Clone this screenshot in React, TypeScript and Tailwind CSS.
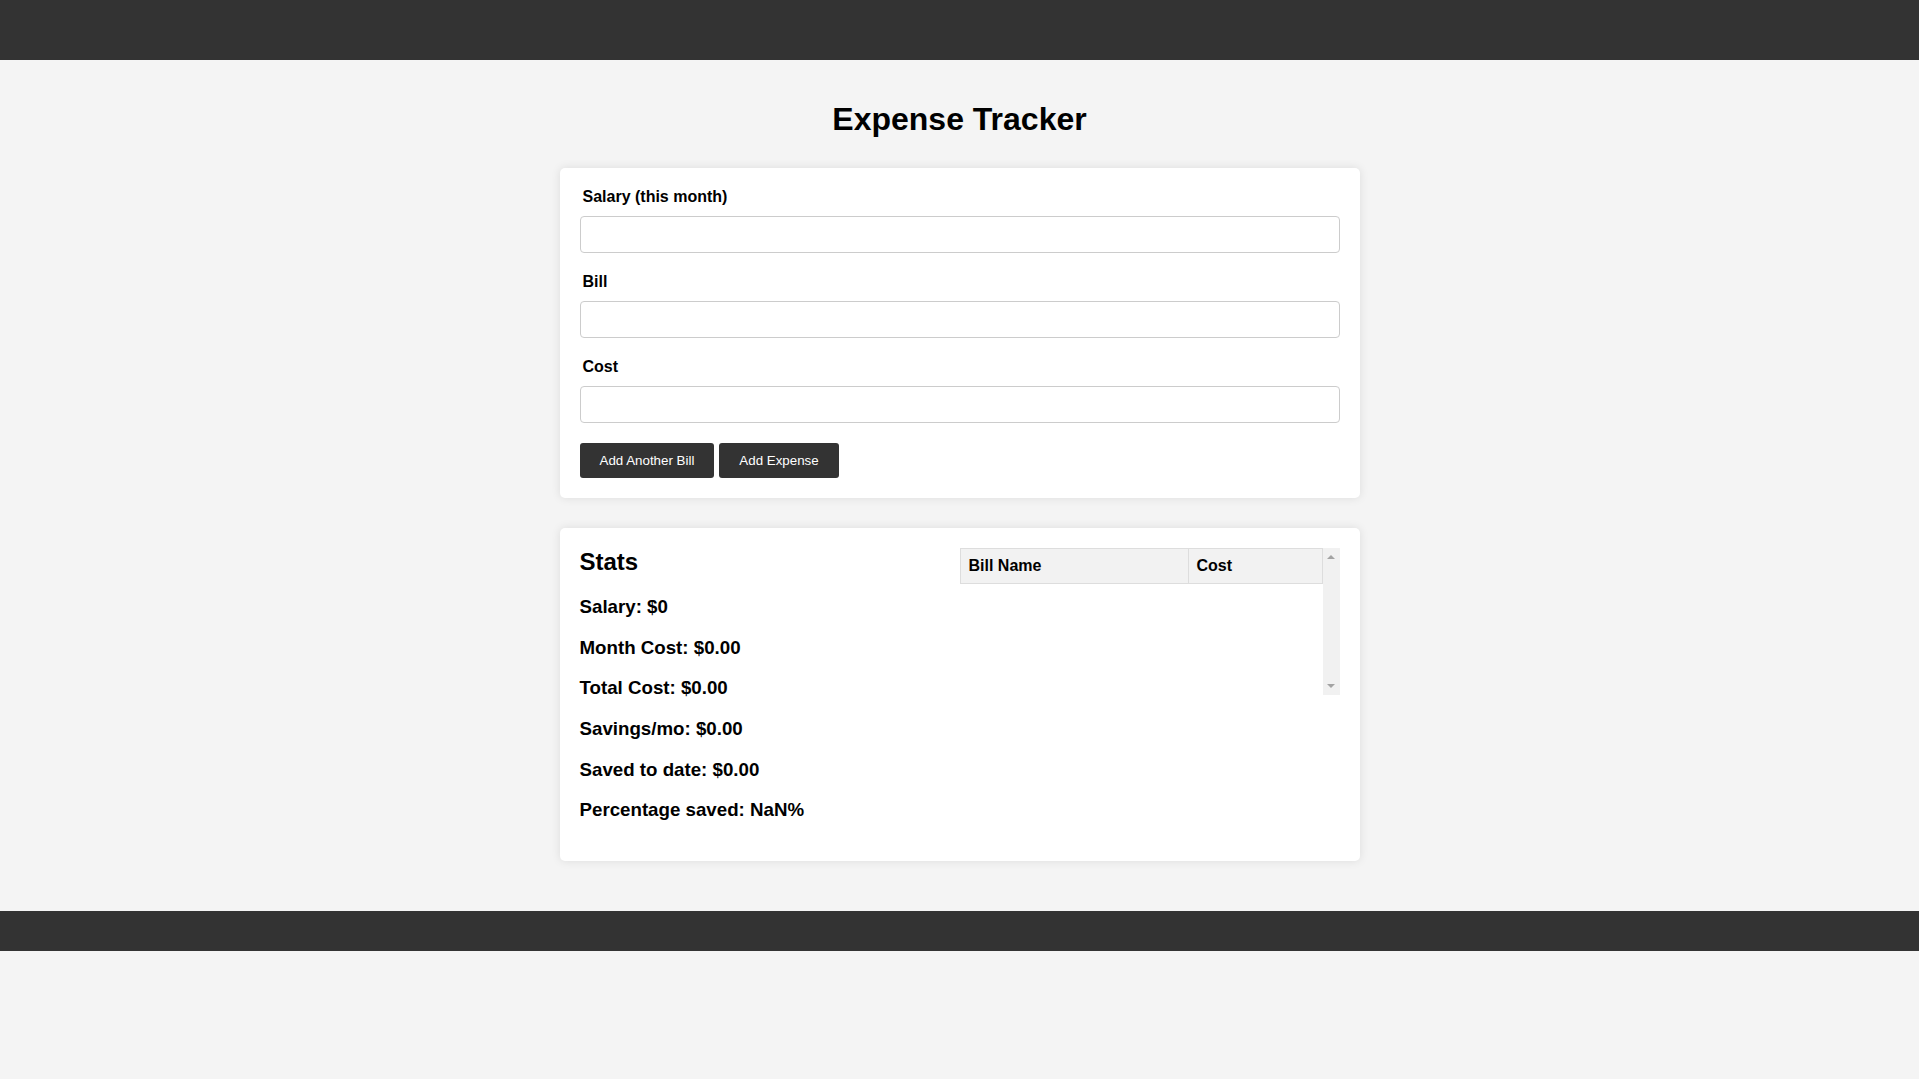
import React from "react";

export default function App() {
  const stats = [
    "Salary: $0",
    "Month Cost: $0.00",
    "Total Cost: $0.00",
    "Savings/mo: $0.00",
    "Saved to date: $0.00",
    "Percentage saved: NaN%",
  ];
  const fields = ["Salary (this month)", "Bill", "Cost"];
  return (
    <div className="min-h-screen bg-[#f4f4f4] text-black font-['Liberation_Sans',Arial,sans-serif]">
      <header className="h-[60px] bg-[#333]" />
      <main className="w-[800px] mx-auto">
        <h1 className="text-[32px] leading-[37px] font-bold text-center mt-[41px] mb-[30px]">
          Expense Tracker
        </h1>
        <section className="bg-white rounded-[5px] shadow-[0_0_10px_rgba(0,0,0,0.1)] p-5">
          {fields.map((f, i) => (
            <div key={f} className={i > 0 ? "mt-5" : ""}>
              <label className="block pl-[3px] text-[16px] leading-[18px] font-bold mb-[10px]">{f}</label>
              <input
                type="text"
                className="block w-full h-[37px] border border-[#ccc] rounded-[4px] bg-white px-[10px] outline-none"
              />
            </div>
          ))}
          <div className="flex mt-5">
            <button className="h-[35px] px-5 bg-[#333] text-white text-[13.333px] rounded-[3px]">
              Add Another Bill
            </button>
            <button className="h-[35px] px-5 ml-[5px] bg-[#333] text-white text-[13.333px] rounded-[3px]">
              Add Expense
            </button>
          </div>
        </section>
        <section className="mt-[30px] bg-white rounded-[5px] shadow-[0_0_10px_rgba(0,0,0,0.1)] p-5 grid grid-cols-2">
          <div className="flex flex-col pb-5">
            <h2 className="text-[24px] leading-[28px] font-bold mb-5">Stats</h2>
            <div className="flex flex-col gap-[19.2px]">
              {stats.map((s) => (
                <p key={s} className="text-[18.72px] leading-[21.5px] font-bold">
                  {s}
                </p>
              ))}
            </div>
          </div>
          <div>
            <div className="flex h-[147px] w-[380px]">
              <div className="w-[363px]">
                <table className="w-full border-collapse">
                  <thead>
                    <tr>
                      <th className="w-[228px] border border-[#ddd] bg-[#f2f2f2] px-2 py-2 text-left text-[16px] leading-[18px] font-bold">
                        Bill Name
                      </th>
                      <th className="border border-[#ddd] bg-[#f2f2f2] px-2 py-2 text-left text-[16px] leading-[18px] font-bold">
                        Cost
                      </th>
                    </tr>
                  </thead>
                  <tbody />
                </table>
              </div>
              <div className="w-[17px] bg-[#f1f1f1] flex flex-col items-center justify-between py-[7px]">
                <div className="w-0 h-0 border-l-[4px] border-r-[4px] border-b-[4px] border-l-transparent border-r-transparent border-b-[#a3a3a3]" />
                <div className="w-0 h-0 border-l-[4px] border-r-[4px] border-t-[4px] border-l-transparent border-r-transparent border-t-[#a3a3a3]" />
              </div>
            </div>
          </div>
        </section>
      </main>
      <footer className="mt-[50px] h-[40px] bg-[#333]" />
    </div>
  );
}
